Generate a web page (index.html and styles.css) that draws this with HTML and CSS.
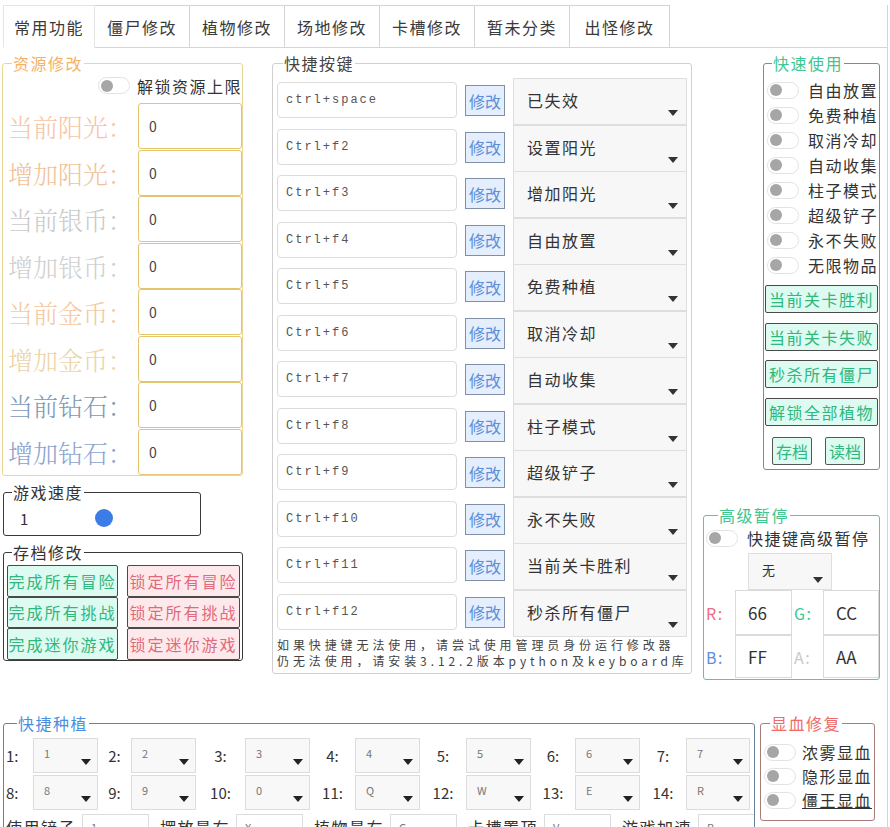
FILE: index.html
```html
<!DOCTYPE html>
<html lang="zh-CN">
<head>
    <meta charset="UTF-8">
    <meta name="viewport" content="width=device-width, initial-scale=1.0">
    <title>修改器</title>
    <link rel="stylesheet" href="styles.css">
</head>
<body>
    <div class="tabs">
        <div class="tab active">常用功能</div>
        <div class="tab">僵尸修改</div>
        <div class="tab">植物修改</div>
        <div class="tab">场地修改</div>
        <div class="tab">卡槽修改</div>
        <div class="tab">暂未分类</div>
        <div class="tab">出怪修改</div>
        <div class="tab-fill"></div>
    </div>

    <div class="panel">
        <div class="top">
            <!-- left column -->
            <div class="col-left">
                <fieldset class="box res">
                    <legend>资源修改</legend>
                    <div class="unlock"><span class="toggle"></span><span>解锁资源上限</span></div>
                    <div class="res-row"><span class="res-label sun1">当前阳光：</span><div class="res-input">0</div></div>
                    <div class="res-row"><span class="res-label sun2">增加阳光：</span><div class="res-input">0</div></div>
                    <div class="res-row"><span class="res-label silver1">当前银币：</span><div class="res-input">0</div></div>
                    <div class="res-row"><span class="res-label silver2">增加银币：</span><div class="res-input">0</div></div>
                    <div class="res-row"><span class="res-label gold1">当前金币：</span><div class="res-input">0</div></div>
                    <div class="res-row"><span class="res-label gold2">增加金币：</span><div class="res-input">0</div></div>
                    <div class="res-row"><span class="res-label gem1">当前钻石：</span><div class="res-input">0</div></div>
                    <div class="res-row"><span class="res-label gem2">增加钻石：</span><div class="res-input">0</div></div>
                </fieldset>

                <fieldset class="box speed">
                    <legend>游戏速度</legend>
                    <div class="speed-row"><span class="speed-val">1</span><span class="thumb"></span></div>
                </fieldset>

                <fieldset class="box save">
                    <legend>存档修改</legend>
                    <div class="save-grid">
                        <div class="btn-green">完成所有冒险</div>
                        <div class="btn-red">锁定所有冒险</div>
                        <div class="btn-green">完成所有挑战</div>
                        <div class="btn-red">锁定所有挑战</div>
                        <div class="btn-green">完成迷你游戏</div>
                        <div class="btn-red">锁定迷你游戏</div>
                    </div>
                </fieldset>
            </div>

            <!-- hotkeys -->
            <fieldset class="box keys">
                <legend>快捷按键</legend>
                <div class="key-list">
                    <div class="key-row"><div class="key-input">ctrl+space</div><div class="key-btn">修改</div><div class="combo"><span>已失效</span><i class="arrow"></i></div></div>
                    <div class="key-row"><div class="key-input">Ctrl+f2</div><div class="key-btn">修改</div><div class="combo"><span>设置阳光</span><i class="arrow"></i></div></div>
                    <div class="key-row"><div class="key-input">Ctrl+f3</div><div class="key-btn">修改</div><div class="combo"><span>增加阳光</span><i class="arrow"></i></div></div>
                    <div class="key-row"><div class="key-input">Ctrl+f4</div><div class="key-btn">修改</div><div class="combo"><span>自由放置</span><i class="arrow"></i></div></div>
                    <div class="key-row"><div class="key-input">Ctrl+f5</div><div class="key-btn">修改</div><div class="combo"><span>免费种植</span><i class="arrow"></i></div></div>
                    <div class="key-row"><div class="key-input">Ctrl+f6</div><div class="key-btn">修改</div><div class="combo"><span>取消冷却</span><i class="arrow"></i></div></div>
                    <div class="key-row"><div class="key-input">Ctrl+f7</div><div class="key-btn">修改</div><div class="combo"><span>自动收集</span><i class="arrow"></i></div></div>
                    <div class="key-row"><div class="key-input">Ctrl+f8</div><div class="key-btn">修改</div><div class="combo"><span>柱子模式</span><i class="arrow"></i></div></div>
                    <div class="key-row"><div class="key-input">Ctrl+f9</div><div class="key-btn">修改</div><div class="combo"><span>超级铲子</span><i class="arrow"></i></div></div>
                    <div class="key-row"><div class="key-input">Ctrl+f10</div><div class="key-btn">修改</div><div class="combo"><span>永不失败</span><i class="arrow"></i></div></div>
                    <div class="key-row"><div class="key-input">Ctrl+f11</div><div class="key-btn">修改</div><div class="combo"><span>当前关卡胜利</span><i class="arrow"></i></div></div>
                    <div class="key-row"><div class="key-input">Ctrl+f12</div><div class="key-btn">修改</div><div class="combo"><span>秒杀所有僵尸</span><i class="arrow"></i></div></div>
                </div>
                <div class="key-note">如果快捷键无法使用，请尝试使用管理员身份运行修改器<br>仍无法使用，请安装3.12.2版本python及keyboard库</div>
            </fieldset>

            <!-- right column -->
            <div class="col-right">
                <fieldset class="box quick">
                    <legend>快速使用</legend>
                    <div class="switch-row"><span class="toggle"></span><span>自由放置</span></div>
                    <div class="switch-row"><span class="toggle"></span><span>免费种植</span></div>
                    <div class="switch-row"><span class="toggle"></span><span>取消冷却</span></div>
                    <div class="switch-row"><span class="toggle"></span><span>自动收集</span></div>
                    <div class="switch-row"><span class="toggle"></span><span>柱子模式</span></div>
                    <div class="switch-row"><span class="toggle"></span><span>超级铲子</span></div>
                    <div class="switch-row"><span class="toggle"></span><span>永不失败</span></div>
                    <div class="switch-row"><span class="toggle"></span><span>无限物品</span></div>
                    <div class="quick-btns">
                        <div class="btn-green">当前关卡胜利</div>
                        <div class="btn-green">当前关卡失败</div>
                        <div class="btn-green">秒杀所有僵尸</div>
                        <div class="btn-green">解锁全部植物</div>
                    </div>
                    <div class="file-btns">
                        <div class="btn-green small">存档</div>
                        <div class="btn-green small">读档</div>
                    </div>
                </fieldset>

                <fieldset class="box pause">
                    <legend>高级暂停</legend>
                    <div class="pause-switch"><span class="toggle"></span><span>快捷键高级暂停</span></div>
                    <div class="combo pause-combo"><span>无</span><i class="arrow"></i></div>
                    <div class="rgba">
                        <span class="ch ch-r">R:</span><div class="ch-input">66</div>
                        <span class="ch ch-g">G:</span><div class="ch-input">CC</div>
                        <span class="ch ch-b">B:</span><div class="ch-input">FF</div>
                        <span class="ch ch-a">A:</span><div class="ch-input">AA</div>
                    </div>
                </fieldset>
            </div>
        </div>

        <div class="bottom">
            <fieldset class="box plant">
                <legend>快捷种植</legend>
                <div class="plant-grid">
                    <span class="pl first">1:</span><div class="pcombo"><span>1</span><i class="arrow"></i></div>
                    <span class="pl">2:</span><div class="pcombo"><span>2</span><i class="arrow"></i></div>
                    <span class="pl">3:</span><div class="pcombo"><span>3</span><i class="arrow"></i></div>
                    <span class="pl">4:</span><div class="pcombo"><span>4</span><i class="arrow"></i></div>
                    <span class="pl">5:</span><div class="pcombo"><span>5</span><i class="arrow"></i></div>
                    <span class="pl">6:</span><div class="pcombo"><span>6</span><i class="arrow"></i></div>
                    <span class="pl">7:</span><div class="pcombo"><span>7</span><i class="arrow"></i></div>
                    <span class="pl first">8:</span><div class="pcombo"><span>8</span><i class="arrow"></i></div>
                    <span class="pl">9:</span><div class="pcombo"><span>9</span><i class="arrow"></i></div>
                    <span class="pl">10:</span><div class="pcombo"><span>0</span><i class="arrow"></i></div>
                    <span class="pl">11:</span><div class="pcombo"><span>Q</span><i class="arrow"></i></div>
                    <span class="pl">12:</span><div class="pcombo"><span>W</span><i class="arrow"></i></div>
                    <span class="pl">13:</span><div class="pcombo"><span>E</span><i class="arrow"></i></div>
                    <span class="pl">14:</span><div class="pcombo"><span>R</span><i class="arrow"></i></div>
                </div>
                <div class="plant-extra">
                    <span class="ex-label">使用铲子</span><div class="ex-input">1</div>
                    <span class="ex-label">摆放最右</span><div class="ex-input">X</div>
                    <span class="ex-label">植物最右</span><div class="ex-input">C</div>
                    <span class="ex-label">卡槽置顶</span><div class="ex-input">V</div>
                    <span class="ex-label">游戏加速</span><div class="ex-input">B</div>
                </div>
            </fieldset>

            <fieldset class="box blood">
                <legend>显血修复</legend>
                <div class="switch-row"><span class="toggle"></span><span>浓雾显血</span></div>
                <div class="switch-row"><span class="toggle"></span><span>隐形显血</span></div>
                <div class="switch-row"><span class="toggle"></span><span class="under">僵王显血</span></div>
            </fieldset>
        </div>
    </div>
</body>
</html>
```

FILE: styles.css
```css
* {
    box-sizing: border-box;
}
body {
    margin: 0;
    font-family: "Noto Sans CJK SC", "Noto Sans", sans-serif;
    font-size: 16px;
    letter-spacing: 1.5px;
    color: #333;
    background-color: #fff;
    overflow: hidden;
}

/* tabs */
.tabs {
    display: flex;
    height: 43px;
    margin-top: 5px;
    padding-left: 3px;
    width: 888px;
}
.tab {
    width: 95px;
    display: flex;
    align-items: center;
    justify-content: center;
    border: 1px solid #d4d4d4;
    border-left: none;
    background-color: #fff;
    line-height: 1;
    color: #3a3a3a;
}
.tab.active {
    width: 92px;
    border-left: 1px solid #e4e4e4;
    border-top-color: #e4e4e4;
    border-right-color: #e4e4e4;
    border-bottom-color: #fff;
}
.tab:nth-child(7) {
    width: 100px;
}
.tab-fill {
    flex: 1;
    border-bottom: 1px solid #d4d4d4;
    border-right: 1px solid #d4d4d4;
}
.panel {
    width: 888px;
    border-right: 1px solid #d4d4d4;
    height: 780px;
}

/* fieldsets */
.box {
    margin: 0;
    padding: 0;
    min-width: 0;
    border: 1px solid #ccc;
    border-radius: 3px;
}
.box legend {
    padding: 0 1px;
    margin-left: 9px;
    font-size: 16px;
    line-height: 18px;
}

.top {
    display: flex;
    align-items: flex-start;
    padding-top: 6px;
}
.col-left {
    width: 241px;
    margin-left: 2px;
}

/* resources */
.res {
    border-color: #ecd696;
}
.res legend {
    color: #f5b267;
}
.unlock {
    height: 31px;
    display: flex;
    align-items: center;
    justify-content: flex-end;
    gap: 7px;
    padding-bottom: 4px;
}
.res-row {
    height: 46.5px;
    display: flex;
    align-items: center;
    padding-left: 5px;
}
.res-label {
    width: 130px;
    font-family: "Noto Serif CJK SC", "Noto Sans CJK SC", serif;
    font-size: 25px;
    letter-spacing: 0;
    font-weight: 300;
    white-space: nowrap;
    overflow: hidden;
}
.sun1 { color: #f6c6a4; }
.sun2 { color: #f0c39a; }
.silver1 { color: #cacaca; }
.silver2 { color: #cfd0d0; }
.gold1 { color: #f6c8a0; }
.gold2 { color: #ebd5a6; }
.gem1 { color: #7e98b6; }
.gem2 { color: #8da4cf; }
.res-input {
    width: 104px;
    height: 46px;
    border: 1px solid #e4c56e;
    border-radius: 3px;
    display: flex;
    align-items: center;
    padding-left: 10px;
    font-size: 14px;
    color: #444;
}

/* speed */
.speed, .save {
    border-color: #3a3a3a;
    margin-top: 7px;
    margin-left: 1px;
}
.speed {
    width: 198px;
}
.speed legend, .save legend {
    margin-left: 8px;
}
.speed-row {
    height: 34px;
    display: flex;
    align-items: center;
    padding-left: 16px;
    font-size: 15px;
}
.thumb {
    width: 18px;
    height: 18px;
    border-radius: 50%;
    background-color: #3b7ce6;
    margin-left: 65px;
}
.save {
    width: 240px;
}
.save-grid {
    display: grid;
    grid-template-columns: 111px 113px;
    grid-auto-rows: 31.5px;
    column-gap: 9px;
    padding: 4px 0 0 3px;
}
.btn-green, .btn-red {
    display: flex;
    align-items: center;
    justify-content: center;
    border: 1px solid #4a4a4a;
    border-radius: 2px;
    white-space: nowrap;
    overflow: hidden;
    font-size: 16px;
    letter-spacing: 2px;
}
.btn-green {
    background-color: #ddfbf1;
    color: #2fb77d;
}
.btn-red {
    background-color: #fde9eb;
    color: #e2697a;
}

/* hotkeys */
.keys {
    width: 420px;
    margin-left: 29px;
    border-color: #d0d0d0;
}
.keys legend {
    color: #444;
    margin-left: 10px;
}
.key-list {
    padding-top: 6px;
}
.key-row {
    height: 46.5px;
    display: flex;
    align-items: flex-start;
    padding-left: 4px;
}
.key-input {
    width: 180px;
    height: 36px;
    margin-top: 4px;
    border: 1px solid #dcdcdc;
    border-radius: 4px;
    display: flex;
    align-items: center;
    padding-left: 8px;
    font-family: "Liberation Mono", monospace;
    font-size: 12px;
    letter-spacing: 2px;
    color: #555;
}
.key-btn {
    width: 40px;
    height: 31px;
    margin-top: 7px;
    margin-left: 8px;
    border: 1px solid #7f8fa5;
    background-color: #e4eefc;
    color: #5b8fd9;
    display: flex;
    align-items: center;
    justify-content: center;
    letter-spacing: 0;
    font-size: 16px;
}
.combo {
    width: 174px;
    height: 47px;
    margin-left: 8px;
    border: 1px solid #dedede;
    background-color: #f7f7f7;
    display: flex;
    justify-content: space-between;
    padding: 10px 8px 8px 13px;
    color: #333;
}
.combo span {
    align-self: flex-start;
    line-height: 22px;
}
.arrow {
    align-self: flex-end;
    width: 0;
    height: 0;
    border-left: 5px solid transparent;
    border-right: 5px solid transparent;
    border-top: 6px solid #333;
}
.key-note {
    padding: 1px 0 4px 4px;
    font-size: 12px;
    line-height: 16px;
    letter-spacing: 3.9px;
    color: #444;
    white-space: nowrap;
    overflow: hidden;
}

/* right column */
.col-right {
    width: 177px;
    margin-left: 11px;
    display: flex;
    flex-direction: column;
    align-items: flex-end;
}
.quick {
    width: 117px;
    border-color: #5e9d8e;
}
.quick legend {
    color: #3fc58f;
    margin-left: 8px;
}
.quick > .switch-row:first-of-type {
    margin-top: 5.5px;
}
.switch-row {
    height: 25px;
    display: flex;
    align-items: center;
    padding-left: 3px;
    gap: 9px;
    white-space: nowrap;
}
.toggle {
    width: 32px;
    height: 17px;
    flex: none;
    border: 1px solid #e2e2e2;
    border-radius: 9px;
    background-color: #fff;
    display: flex;
    align-items: center;
    padding-left: 2px;
}
.toggle::before {
    content: "";
    width: 12px;
    height: 12px;
    border-radius: 50%;
    background-color: #a6a6a6;
}
.quick-btns {
    display: flex;
    flex-direction: column;
    gap: 9.5px;
    margin-top: 7.5px;
    padding: 0 1px;
}
.quick-btns .btn-green {
    height: 28px;
    letter-spacing: 1.5px;
}
.file-btns {
    display: flex;
    justify-content: space-between;
    padding: 0 14px 0 8px;
    margin-top: 11.5px;
    margin-bottom: 4px;
}
.btn-green.small {
    width: 40px;
    height: 28px;
    letter-spacing: 0;
    border-color: #555;
}

.pause {
    width: 177px;
    margin-top: 36px;
    border-color: #62c2a2;
}
.pause legend {
    color: #3fc58f;
    margin-left: 14px;
}
.pause-switch {
    height: 22px;
    margin-top: 3px;
    display: flex;
    align-items: center;
    gap: 9px;
    padding-left: 2px;
    white-space: nowrap;
}
.combo.pause-combo {
    width: 84px;
    height: 37px;
    margin: 4px 0 0 44px;
    padding: 7px 8px 6px 13px;
    font-size: 13px;
}
.pause-combo span {
    line-height: 18px;
}
.rgba {
    display: grid;
    grid-template-columns: 31px 57px 31px 56px;
    grid-template-rows: 45px 43px;
    margin-bottom: 1px;
}
.ch {
    display: flex;
    align-items: center;
    padding-left: 2px;
    font-size: 16px;
}
.ch-r { color: #f06b83; }
.ch-g { color: #3cc990; }
.ch-b { color: #5d8de6; }
.ch-a { color: #c9c9c9; }
.ch-input {
    border: 1px solid #dadada;
    display: flex;
    align-items: center;
    padding-left: 12px;
    font-size: 17px;
    letter-spacing: 0;
    color: #333;
    background-color: #fff;
}

/* bottom row */
.bottom {
    display: flex;
    align-items: flex-start;
    margin-top: 34px;
}
.plant {
    width: 752px;
    margin-left: 3px;
    border-color: #6b7f9e;
}
.plant legend {
    color: #4a8fe2;
    margin-left: 13px;
}
.plant-grid {
    display: grid;
    grid-template-columns: 29px 65px 33px 65px 49px 65px 45px 65px 46px 65px 44px 65px 46px 64px;
    grid-auto-rows: 37px;
    padding-top: 5px;
    align-items: center;
}
.pl {
    text-align: center;
    font-size: 15px;
    letter-spacing: 0;
    color: #333;
}
.pl.first {
    text-align: left;
    padding-left: 2px;
}
.pcombo {
    height: 35px;
    border: 1px solid #dcdcdc;
    background-color: #f8f8f8;
    display: flex;
    justify-content: space-between;
    padding: 6px 6px 7px 10px;
    font-size: 11px;
    color: #777;
    letter-spacing: 0;
}
.pcombo span {
    align-self: flex-start;
}
.pcombo .arrow {
    border-top-color: #222;
}
.plant-extra {
    display: flex;
    align-items: flex-start;
    height: 36px;
    padding-top: 3px;
    white-space: nowrap;
    overflow: hidden;
}
.ex-label {
    width: 78px;
    flex: none;
    padding-left: 2px;
    line-height: 26px;
}
.ex-input {
    width: 67px;
    height: 30px;
    flex: none;
    margin-right: 9px;
    border: 1px solid #dcdcdc;
    padding: 4px 8px;
    font-size: 11px;
    color: #777;
}

.blood {
    width: 115px;
    margin-left: 5px;
    border-color: #aa7b7b;
    padding-top: 8px;
    padding-bottom: 8px;
}
.blood legend {
    color: #f06a6a;
    margin-left: 9px;
}
.blood .switch-row {
    height: 24px;
    gap: 6px;
}
.under {
    text-decoration: underline;
}
```
